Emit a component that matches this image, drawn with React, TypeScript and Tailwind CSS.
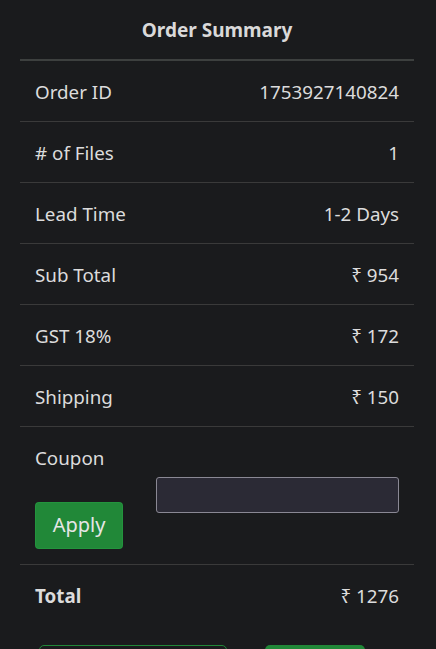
const ROWS = [
  { label: "Order ID", value: "1753927140824" },
  { label: "# of Files", value: "1" },
  { label: "Lead Time", value: "1-2 Days" },
  { label: "Sub Total", value: "₹ 954" },
  { label: "GST 18%", value: "₹ 172" },
  { label: "Shipping", value: "₹ 150" },
];

export default function App() {
  return (
    <div
      className="min-h-[649px] bg-[#1a1b1d] text-[#dcdcdc] pl-[20px] pr-[22px] overflow-hidden"
      style={{ fontFamily: '"Noto Sans", "Open Sans", sans-serif' }}
    >
      {/* Header */}
      <div className="h-[59px] flex items-center justify-center border-b-2 border-[#3d403f] box-content">
        <h2 className="text-[19px] font-bold text-[#d9d9d9] mt-[1px]">Order Summary</h2>
      </div>

      {/* Rows */}
      {ROWS.map((row) => (
        <div
          key={row.label}
          className="h-[61px] flex items-center justify-between px-[15px] pt-[2px] border-b border-[#3a3a3a] text-[18.8px]"
        >
          <span>{row.label}</span>
          <span>{row.value}</span>
        </div>
      ))}

      {/* Coupon */}
      <div className="h-[138px] flex items-stretch border-b border-[#3a3a3a] text-[18.8px]">
        <div className="w-[121px] px-[15px] pt-[18px] flex flex-col">
          <span className="leading-[27px]">Coupon</span>
          <button className="mt-[30px] w-[88px] h-[47px] rounded-[4px] bg-[#218838] border border-[#28a745]/40 text-[20px] text-[#e6e6e6] flex items-center justify-center pb-[1px]">
            Apply
          </button>
        </div>
        <div className="flex-1 flex items-center pr-[15px] pl-[15px] pb-[2px]">
          <input
            type="text"
            className="w-full h-[36px] rounded-[3px] bg-[#2b2a35] border border-[#8a8894] outline-none"
          />
        </div>
      </div>

      {/* Total */}
      <div className="h-[61px] flex items-center justify-between px-[15px] pt-[2px] text-[18.8px]">
        <span className="font-bold">Total</span>
        <span>₹ 1276</span>
      </div>

      {/* Actions */}
      <div className="flex mt-[19px]">
        <button className="ml-[19px] w-[188px] h-[44px] rounded-[5px] border border-[#218838] bg-transparent" />
        <button className="ml-[38px] w-[100px] h-[44px] rounded-[5px] bg-[#218838]" />
      </div>
    </div>
  );
}
